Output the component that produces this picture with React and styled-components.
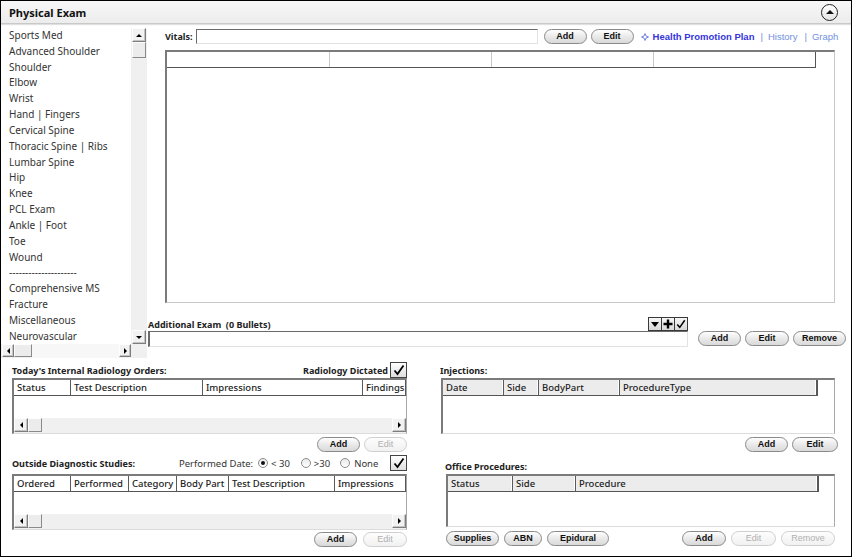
import React from 'react';
import styled, { createGlobalStyle, css } from 'styled-components';

const Global = createGlobalStyle`
  html, body { margin: 0; padding: 0; background: #fff; }
  body { font-family: "Noto Sans", sans-serif; color: #222; }
  * { box-sizing: border-box; }
`;

const UI = `"Noto Sans", "Open Sans", sans-serif`;
const BTN = `"Liberation Sans", Arial, sans-serif`;

const Frame = styled.div`
  width: 852px;
  height: 557px;
  border: 1px solid #000;
  display: flex;
  flex-direction: column;
  background: #fff;
  overflow: hidden;
  font-family: ${UI};
`;

const Header = styled.div`
  height: 23px;
  flex: none;
  display: flex;
  align-items: center;
  justify-content: space-between;
  padding: 0 13px 0 8px;
  background: linear-gradient(#f7f7f7, #ececec);
  border-bottom: 1px solid #c9c9c9;
  box-shadow: 0 1px 1px rgba(0, 0, 0, 0.12);
`;

const Title = styled.div`
  font-weight: 700;
  font-size: 11px;
  color: #111;
`;

const Collapse = styled.div`
  width: 17px;
  height: 17px;
  border-radius: 50%;
  border: 1.5px solid #222;
  background: linear-gradient(#fff, #e4e4e4);
  display: flex;
  align-items: center;
  justify-content: center;
  &::after {
    content: '';
    border-left: 4px solid transparent;
    border-right: 4px solid transparent;
    border-bottom: 4px solid #111;
    margin-top: -1px;
  }
`;

const Top = styled.div`
  height: 334px;
  flex: none;
  display: flex;
`;

const LeftPanel = styled.div`
  width: 146px;
  flex: none;
  display: flex;
  flex-direction: column;
`;

const ListRow = styled.div`
  height: 320px;
  display: flex;
`;

const List = styled.div`
  width: 130px;
  padding: 4px 0 0 8px;
  display: flex;
  flex-direction: column;
  overflow: hidden;
`;

const ListItem = styled.div`
  height: 15.84px;
  line-height: 15.84px;
  font-size: 10px;
  color: #333;
  white-space: nowrap;
`;

const VScroll = styled.div`
  width: 16px;
  margin-top: 4px;
  background: #f0f0f0;
  display: flex;
  flex-direction: column;
  align-items: center;
`;

const ScrollBtn = styled.div`
  width: ${p => p.w || 14}px;
  height: ${p => p.h || 14}px;
  flex: none;
  background: #f2f2f2;
  border: 1px solid;
  border-color: #fdfdfd #7d7d7d #7d7d7d #fdfdfd;
  box-shadow: inset -1px -1px 0 #c4c4c4;
  display: flex;
  align-items: center;
  justify-content: center;
`;

const Thumb = styled.div`
  width: ${p => p.w || 14}px;
  height: ${p => p.h || 14}px;
  flex: none;
  background: #ececec;
  border: 1px solid;
  border-color: #fdfdfd #8a8a8a #8a8a8a #fdfdfd;
`;

const Tri = styled.span`
  width: 0;
  height: 0;
  ${p => p.dir === 'up' && css`
    border-left: 3px solid transparent;
    border-right: 3px solid transparent;
    border-bottom: 3px solid #000;
  `}
  ${p => p.dir === 'down' && css`
    border-left: ${p.big ? 4 : 3}px solid transparent;
    border-right: ${p.big ? 4 : 3}px solid transparent;
    border-top: ${p.big ? 5 : 3}px solid #000;
  `}
  ${p => p.dir === 'left' && css`
    border-top: 3px solid transparent;
    border-bottom: 3px solid transparent;
    border-right: 3px solid #000;
  `}
  ${p => p.dir === 'right' && css`
    border-top: 3px solid transparent;
    border-bottom: 3px solid transparent;
    border-left: 3px solid #000;
  `}
`;

const Spacer = styled.div`
  flex: 1;
`;

const HScrollRow = styled.div`
  height: 14px;
  display: flex;
  background: #f0f0f0;
  padding: 0 16px 0 1px;
  align-items: stretch;
`;

const Track = styled.div`
  flex: 1;
  display: flex;
  align-items: center;
  background: ${p => p.bg || '#f0f0f0'};
`;

const Right = styled.div`
  flex: 1;
  display: flex;
  flex-direction: column;
  padding-left: 1px;
`;

const VitalsRow = styled.div`
  margin: 5px 0 0 17px;
  height: 15px;
  display: flex;
  align-items: center;
`;

const Label = styled.span`
  font-weight: 700;
  font-size: 9px;
  color: #222;
  white-space: nowrap;
`;

const Text = styled.span`
  font-size: ${p => p.size || 9.5}px;
  color: #333;
  white-space: nowrap;
  margin-left: ${p => p.ml || 0}px;
`;

const Input = styled.div`
  width: ${p => p.w}px;
  height: ${p => p.h || 15}px;
  background: #fff;
  border: 1px solid;
  border-color: #6a6a6a #e2e2e2 #e2e2e2 #6a6a6a;
  border-width: ${p => (p.thick ? '1px 1px 1px 2px' : '1px')};
  margin-left: ${p => p.ml || 0}px;
  flex: none;
`;

const Pill = styled.button`
  width: ${p => p.w || 43}px;
  height: 15px;
  flex: none;
  margin-left: ${p => p.ml || 0}px;
  padding: 0;
  border-radius: 8px;
  border: 1px solid ${p => (p.disabled ? '#cfcfcf' : '#8a8a8a')};
  background: ${p => (p.disabled ? 'linear-gradient(#fdfdfd, #f1f1f1)' : 'linear-gradient(#fefefe, #e6e6e6 60%, #d9d9d9)')};
  font-family: ${BTN};
  font-size: 9px;
  line-height: 13px;
  color: ${p => (p.disabled ? '#b0b0b0' : '#111')};
  font-weight: ${p => (p.disabled ? 400 : 700)};
`;

const Links = styled.div`
  margin-left: 7px;
  display: flex;
  align-items: center;
  font-family: ${BTN};
  font-size: 9.5px;
  white-space: nowrap;
`;

const LinkMain = styled.span`
  color: #3434dc;
  font-weight: 700;
  margin-left: 4px;
`;

const LinkSub = styled.span`
  color: #7490e0;
  margin-left: ${p => p.ml || 0}px;
`;

const Grid = styled.div`
  margin: 6px 0 0 17px;
  width: 670px;
  height: 253px;
  flex: none;
  border-style: solid;
  border-width: 2px 1px 1px 2px;
  border-color: #7b7b7b #c8c8c8 #c8c8c8 #7b7b7b;
  background: #fff;
`;

const GridHead = styled.div`
  display: flex;
  width: ${p => p.w}px;
  height: ${p => p.h || 16}px;
  border-bottom: 1px solid #555;
  border-right: 1px solid #555;
  background: ${p => p.bg || '#fff'};
`;

const HeadCell = styled.div`
  width: ${p => p.w}px;
  flex: ${p => (p.w ? 'none' : 1)};
  height: 100%;
  border-right: ${p => (p.last ? 'none' : `1px solid ${p.sep || '#666'}`)};
  box-shadow: ${p => (p.last || p.flat ? 'none' : 'inset -1px 0 0 #fff')};
  padding-left: 3px;
  font-size: 9.5px;
  font-weight: 500;
  line-height: 15px;
  color: #222;
  white-space: nowrap;
  overflow: hidden;
`;

const AddlSection = styled.div`
  margin-top: 14px;
  display: flex;
  align-items: flex-end;
`;

const AddlMain = styled.div`
  width: 540px;
  display: flex;
  flex-direction: column;
`;

const AddlHead = styled.div`
  height: 14px;
  display: flex;
  align-items: center;
  justify-content: space-between;
`;

const ToolGroup = styled.div`
  display: flex;
  align-self: flex-end;
`;

const ToolBtn = styled.div`
  width: 14px;
  height: 14px;
  border: 1px solid #3a3a3a;
  margin-left: -1px;
  background: linear-gradient(#f6f6f6, #d8d8d8);
  display: flex;
  align-items: center;
  justify-content: center;
`;

const BtnRow = styled.div`
  display: flex;
  align-items: center;
  justify-content: ${p => p.justify || 'flex-end'};
  margin: ${p => p.m || '0'};
  width: ${p => (p.w ? `${p.w}px` : 'auto')};
  height: 15px;
`;

const Bottom = styled.div`
  flex: 1;
  display: flex;
`;

const Col = styled.div`
  width: ${p => p.w}px;
  margin-left: ${p => p.ml}px;
  display: flex;
  flex-direction: column;
  flex: none;
`;

const SecHead = styled.div`
  height: 16px;
  margin: ${p => p.m || '0'};
  display: flex;
  align-items: center;
  padding-left: ${p => p.pl || 0}px;
`;

const TableBox = styled.div`
  width: ${p => p.w}px;
  height: ${p => p.h}px;
  margin: ${p => p.m || '0'};
  flex: none;
  display: flex;
  flex-direction: column;
  border-style: solid;
  border-width: 2px 1px 1px 2px;
  border-color: #7b7b7b #a8a8a8 #dcdcdc #7b7b7b;
  background: #fff;
  overflow: hidden;
`;

const TableHScroll = styled.div`
  margin-top: auto;
  height: 15px;
  display: flex;
  background: #f0f0f0;
  padding-bottom: 1px;
`;

const Check = styled.div`
  width: 17px;
  height: 16px;
  flex: none;
  border: 1px solid #444;
  background: linear-gradient(#fff, #dedede);
  display: flex;
  align-items: center;
  justify-content: center;
  margin-left: ${p => p.ml || 0}px;
`;

const Radio = styled.span`
  width: 10px;
  height: 10px;
  border-radius: 50%;
  border: 1px solid #8c8c8c;
  background: linear-gradient(#e9e9e9, #fff);
  display: inline-flex;
  align-items: center;
  justify-content: center;
  margin: 0 ${p => p.mr || 3}px 0 ${p => p.ml || 0}px;
  flex: none;
  &::after {
    content: '';
    width: 4px;
    height: 4px;
    border-radius: 50%;
    background: ${p => (p.on ? '#111' : 'transparent')};
  }
`;

const CheckMark = ({ size = 12 }) => (
  <svg width={size} height={size} viewBox="0 0 12 12">
    <path d="M1.5 6.5 L4.5 10 L10.5 1.5" fill="none" stroke="#000" strokeWidth="1.8" />
  </svg>
);

const Sparkle = () => (
  <svg width="8" height="8" viewBox="0 0 8 8">
    <path d="M4 0.5 L5 3 L7.5 4 L5 5 L4 7.5 L3 5 L0.5 4 L3 3 Z" fill="none" stroke="#6f86e6" strokeWidth="1" />
  </svg>
);

const HScroll = ({ thumbW = 14 }) => (
  <TableHScroll>
    <ScrollBtn w={14} h={14}><Tri dir="left" /></ScrollBtn>
    <Thumb w={thumbW} h={14} />
    <Track />
    <ScrollBtn w={14} h={14}><Tri dir="right" /></ScrollBtn>
  </TableHScroll>
);

const DataTable = ({ w, h, m, cols, headW, headBg, scroll }) => (
  <TableBox w={w} h={h} m={m}>
    <GridHead w={headW} bg={headBg} h={16}>
      {cols.map((c, i) => (
        <HeadCell key={c.label + i} w={c.w} last={i === cols.length - 1 && !headW} sep="#5a5a5a">
          {c.label}
        </HeadCell>
      ))}
    </GridHead>
    {scroll && <HScroll />}
  </TableBox>
);

const items = [
  'Sports Med', 'Advanced Shoulder', 'Shoulder', 'Elbow', 'Wrist', 'Hand | Fingers',
  'Cervical Spine', 'Thoracic Spine | Ribs', 'Lumbar Spine', 'Hip', 'Knee', 'PCL Exam',
  'Ankle | Foot', 'Toe', 'Wound', '---------------------', 'Comprehensive MS', 'Fracture',
  'Miscellaneous', 'Neurovascular',
];

export default function App() {
  return (
    <>
      <Global />
      <Frame>
        <Header>
          <Title>Physical Exam</Title>
          <Collapse />
        </Header>
        <Top>
          <LeftPanel>
            <ListRow>
              <List>
                {items.map(t => <ListItem key={t}>{t}</ListItem>)}
              </List>
              <VScroll>
                <ScrollBtn><Tri dir="up" /></ScrollBtn>
                <Thumb h={16} />
                <Spacer />
                <ScrollBtn><Tri dir="down" /></ScrollBtn>
              </VScroll>
            </ListRow>
            <HScrollRow>
              <ScrollBtn w={12} h={13}><Tri dir="left" /></ScrollBtn>
              <Thumb w={18} h={13} />
              <Track bg="#f7f7f7" />
              <ScrollBtn w={12} h={13}><Tri dir="right" /></ScrollBtn>
            </HScrollRow>
          </LeftPanel>
          <Right>
            <VitalsRow>
              <Label>Vitals:</Label>
              <Input w={342} ml={3} />
              <Pill ml={6}>Add</Pill>
              <Pill ml={4}>Edit</Pill>
              <Links>
                <Sparkle />
                <LinkMain>Health Promotion Plan</LinkMain>
                <LinkSub ml={6}>|</LinkSub>
                <LinkSub ml={5}>History</LinkSub>
                <LinkSub ml={7}>|</LinkSub>
                <LinkSub ml={5}>Graph</LinkSub>
              </Links>
            </VitalsRow>
            <Grid>
              <GridHead w={649} h={16}>
                <HeadCell w={163} sep="#c9c9c9" flat />
                <HeadCell w={162} sep="#c9c9c9" flat />
                <HeadCell w={162} sep="#c9c9c9" flat />
                <HeadCell last />
              </GridHead>
            </Grid>
            <AddlSection>
              <AddlMain>
                <AddlHead>
                  <Label>Additional Exam&nbsp;&nbsp;(0 Bullets)</Label>
                  <ToolGroup>
                    <ToolBtn><Tri dir="down" big /></ToolBtn>
                    <ToolBtn>
                      <svg width="10" height="10" viewBox="0 0 10 10"><path d="M5 0.5V9.5M0.5 5H9.5" stroke="#000" strokeWidth="2.4" /></svg>
                    </ToolBtn>
                    <ToolBtn><CheckMark size={10} /></ToolBtn>
                  </ToolGroup>
                </AddlHead>
                <Input w={540} h={16} thick />
              </AddlMain>
              <BtnRow m="0 0 1px 10px">
                <Pill w={43}>Add</Pill>
                <Pill w={44} ml={4}>Edit</Pill>
                <Pill w={53} ml={4}>Remove</Pill>
              </BtnRow>
            </AddlSection>
          </Right>
        </Top>
        <Bottom>
          <Col w={395} ml={11}>
            <SecHead m="4px 0 0 0">
              <Label>Today's Internal Radiology Orders:</Label>
              <Spacer />
              <Label>Radiology Dictated</Label>
              <Check ml={2}><CheckMark /></Check>
            </SecHead>
            <DataTable
              w={395}
              h={56}
              cols={[
                { label: 'Status', w: 57 },
                { label: 'Test Description', w: 132 },
                { label: 'Impressions', w: 160 },
                { label: 'Findings' },
              ]}
              scroll
            />
            <BtnRow m="3px 0 0 0">
              <Pill w={43}>Add</Pill>
              <Pill w={43} ml={4} disabled>Edit</Pill>
            </BtnRow>
            <SecHead m="3px 0 0 0">
              <Label>Outside Diagnostic Studies:</Label>
              <Text ml={44}>Performed Date:</Text>
              <Radio on ml={5} />
              <Text>&lt; 30</Text>
              <Radio ml={11} />
              <Text>&gt;30</Text>
              <Radio ml={10} mr={4} />
              <Text>None</Text>
              <Spacer />
              <Check><CheckMark /></Check>
            </SecHead>
            <DataTable
              w={395}
              h={56}
              m="3px 0 0 0"
              cols={[
                { label: 'Ordered', w: 57 },
                { label: 'Performed', w: 58 },
                { label: 'Category', w: 48 },
                { label: 'Body Part', w: 52 },
                { label: 'Test Description', w: 106 },
                { label: 'Impressions' },
              ]}
              scroll
            />
            <BtnRow m="2px 0 0 0">
              <Pill w={43}>Add</Pill>
              <Pill w={44} ml={6} disabled>Edit</Pill>
            </BtnRow>
          </Col>
          <Col w={398} ml={33}>
            <SecHead m="4px 0 0 0">
              <Label>Injections:</Label>
            </SecHead>
            <DataTable
              w={394}
              h={56}
              m="0 0 0 1px"
              headW={375}
              headBg="#ececec"
              cols={[
                { label: 'Date', w: 61 },
                { label: 'Side', w: 35 },
                { label: 'BodyPart', w: 81 },
                { label: 'ProcedureType', w: 197 },
              ]}
            />
            <BtnRow m="3px 0 0 0">
              <Pill w={43}>Add</Pill>
              <Pill w={46} ml={4}>Edit</Pill>
            </BtnRow>
            <SecHead m="6px 0 0 0" pl={5}>
              <Label>Office Procedures:</Label>
            </SecHead>
            <DataTable
              w={389}
              h={53}
              m="0 0 0 6px"
              headW={371}
              headBg="#ececec"
              cols={[
                { label: 'Status', w: 65 },
                { label: 'Side', w: 63 },
                { label: 'Procedure', w: 242 },
              ]}
            />
            <BtnRow m="4px 0 0 6px" w={389} justify="flex-start">
              <Pill w={53}>Supplies</Pill>
              <Pill w={38} ml={5}>ABN</Pill>
              <Pill w={62} ml={5}>Epidural</Pill>
              <Spacer />
              <Pill w={44}>Add</Pill>
              <Pill w={45} ml={5} disabled>Edit</Pill>
              <Pill w={54} ml={5} disabled>Remove</Pill>
            </BtnRow>
          </Col>
        </Bottom>
      </Frame>
    </>
  );
}
